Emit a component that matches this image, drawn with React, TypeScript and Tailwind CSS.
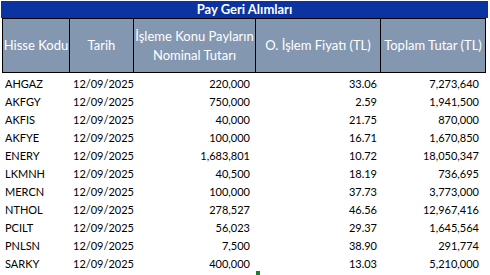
import React from "react";

const rows: [string, string, string, string, string][] = [
  ["AHGAZ", "12/09/2025", "220,000", "33.06", "7,273,640"],
  ["AKFGY", "12/09/2025", "750,000", "2.59", "1,941,500"],
  ["AKFIS", "12/09/2025", "40,000", "21.75", "870,000"],
  ["AKFYE", "12/09/2025", "100,000", "16.71", "1,670,850"],
  ["ENERY", "12/09/2025", "1,683,801", "10.72", "18,050,347"],
  ["LKMNH", "12/09/2025", "40,500", "18.19", "736,695"],
  ["MERCN", "12/09/2025", "100,000", "37.73", "3,773,000"],
  ["NTHOL", "12/09/2025", "278,527", "46.56", "12,967,416"],
  ["PCILT", "12/09/2025", "56,023", "29.37", "1,645,564"],
  ["PNLSN", "12/09/2025", "7,500", "38.90", "291,774"],
  ["SARKY", "12/09/2025", "400,000", "13.03", "5,210,000"],
];

export default function App() {
  return (
    <div
      className="relative w-[490px] h-[275px] bg-white overflow-hidden text-black"
      style={{ fontFamily: "Lato, 'Open Sans', sans-serif" }}
    >
      <div className="ml-[1px] mt-[1px] w-[487px] h-[17px] bg-[#0b33a1] text-white font-bold text-[13px] leading-[17px] text-center">
        Pay Geri Alımları
      </div>
      <div className="ml-[2px] w-[484px] h-[55px] grid grid-cols-[67px_64px_122px_125px_105px] border border-black border-r-0 bg-[#8497b0] text-white text-[13px] leading-[19px]">
        <div className="border-r border-black flex items-center justify-center">Hisse Kodu</div>
        <div className="border-r border-black flex items-center justify-center">Tarih</div>
        <div className="border-r border-black flex flex-col items-center justify-center text-center">
          <span>İşleme Konu Payların</span>
          <span>Nominal Tutarı</span>
        </div>
        <div className="border-r border-black flex items-center justify-center">O. İşlem Fiyatı (TL)</div>
        <div className="border-r border-black flex items-center justify-center">Toplam Tutar (TL)</div>
      </div>
      <div className="ml-[2px] w-[484px] pt-[2px] text-[11px]">
        {rows.map((r) => (
          <div key={r[0]} className="grid grid-cols-[67px_64px_122px_125px_105px] h-[18px] leading-[18px]">
            <div className="pl-[3px]">{r[0]}</div>
            <div className="pl-[4px]">{r[1]}</div>
            <div className="pr-[5px] text-right">{r[2]}</div>
            <div className="pr-[3px] text-right">{r[3]}</div>
            <div className="pr-[6px] text-right">{r[4]}</div>
          </div>
        ))}
      </div>
      <div className="absolute left-[256px] top-[271px] w-[4px] h-[4px] bg-[#1e7b34]" />
    </div>
  );
}
